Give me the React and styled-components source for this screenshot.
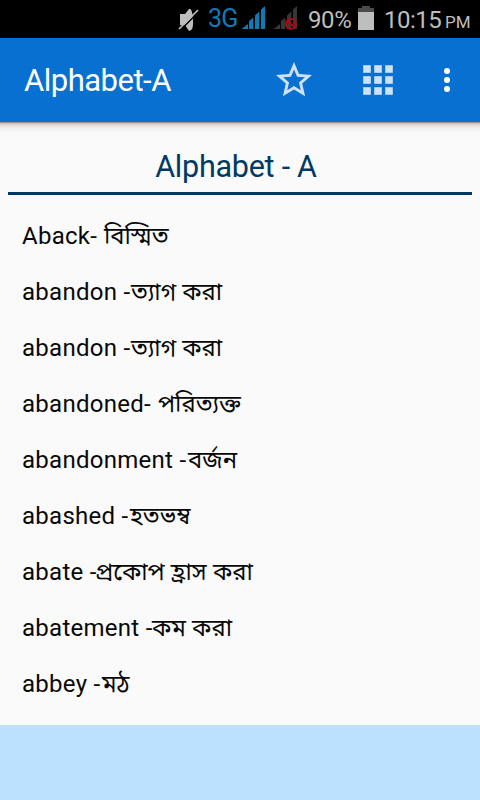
import React from "react";
import styled, { createGlobalStyle } from "styled-components";

const GlobalStyle = createGlobalStyle`
  * { box-sizing: border-box; }
  body { margin: 0; background: #fafafa; }
`;

const Screen = styled.div`
  width: 480px;
  height: 800px;
  display: flex;
  flex-direction: column;
  overflow: hidden;
  background: #fafafa;
  font-family: Roboto, "Noto Sans Bengali", "Noto Sans", sans-serif;
`;

const StatusBar = styled.div`
  flex: none;
  height: 38px;
  display: flex;
  background: #000;
  color: #bebebe;
  padding-left: 178px;
  svg { display: block; flex: none; }
`;

const StatusText = styled.span`
  flex: none;
  width: ${(p) => p.$width}px;
  font-size: ${(p) => p.$size}px;
  line-height: 38px;
  letter-spacing: ${(p) => p.$spacing || 0}px;
  padding-top: ${(p) => p.$drop || 0}px;
  color: ${(p) => p.$color || "inherit"};
  white-space: nowrap;
`;

const AppBar = styled.header`
  flex: none;
  height: 84px;
  display: flex;
  align-items: center;
  padding-left: 24px;
  background: #0870d0;
  color: #fff;
`;

const BarTitle = styled.h1`
  margin: 0;
  padding-top: 2px;
  width: 229px;
  font-size: 31px;
  font-weight: 400;
  line-height: 82px;
  letter-spacing: -0.5px;
  white-space: nowrap;
`;

const BarActions = styled.div`
  display: flex;
  align-items: center;
  svg { display: block; }
`;

const Content = styled.main`
  flex: 1;
  padding: 0 8px;
  background: linear-gradient(#777 0, #b4b4b4 1px, #d2d2d2 2px, #e4e4e4 4px, #f2f2f2 7px, #fafafa 12px);
`;

const Heading = styled.h2`
  margin: 0;
  height: 73px;
  padding: 17px 8px 0 0;
  border-bottom: 3px solid #003a63;
  color: #003a63;
  text-align: center;
  font-size: 30.5px;
  font-weight: 400;
  letter-spacing: -0.25px;
  line-height: 56px;
`;

const WordList = styled.ul`
  margin: 13px 0 0;
  padding: 0 14px;
  list-style: none;
`;

const Word = styled.li`
  display: flex;
  height: 56px;
  font-size: 24px;
  line-height: 56px;
  color: #080808;
  white-space: pre;
`;

const English = styled.span`
  flex: none;
  width: ${(p) => p.$width}px;
  letter-spacing: 0.27px;
`;

const Meaning = styled.span`
  padding-top: 2px;
  font-family: "Noto Sans Bengali", "Noto Sans", sans-serif;
  font-size: 23.9px;
`;

const BottomBanner = styled.footer`
  flex: none;
  height: 75px;
  background: #bbe1ff;
`;

const words = [
  ["Aback- ", "বিস্মিত", 82],
  ["abandon -", "ত্যাগ করা", 109],
  ["abandon -", "ত্যাগ করা", 109],
  ["abandoned- ", "পরিত্যক্ত", 136],
  ["abandonment -", "বর্জন", 166],
  ["abashed -", "হতভম্ব", 108],
  ["abate -", "প্রকোপ হ্রাস করা", 73],
  ["abatement -", "কম করা", 130],
  ["abbey -", "মঠ", 80],
];

const StatusIcons = {
  Muted: () => (
    <svg width="30" height="38" viewBox="178 0 30 38">
      <path d="M180 14h5l4-5q3-2 4 10t-4 12l-4-6h-5z" fill="#bebebe" />
      <path d="M180.300 30.300L199.300 11.300" stroke="#000" strokeWidth="1.500" />
      <path d="M179 29L198 10" stroke="#bebebe" strokeWidth="1.700" />
    </svg>
  ),
  Signal: () => (
    <svg width="31" height="38" viewBox="241 0 31 38">
      <path d="M241.500 29l6.500-5V29zM249 29v-8l4.300-3.500V29zM255 29V15.500l4.300-4V29zM261 29V9.500l4-3.500V29z" fill="#0d7cb5" />
    </svg>
  ),
  NoService: () => (
    <svg width="36" height="38" viewBox="272 0 36 38">
      <path d="M273.500 29l6.500-5V29zM281 29v-8l4.300-3.500V29zM287 29V15.500l4.300-4V29zM293 29V9.500l4-3.500V29z" fill="#373737" />
      <circle cx="291" cy="24" r="5" fill="none" stroke="#a80c0c" strokeWidth="2" />
      <path d="M287.500 20.500l7 7" stroke="#a80c0c" strokeWidth="2" />
    </svg>
  ),
  Battery: () => (
    <svg width="26" height="38" viewBox="358 0 26 38">
      <path d="M358 12V8h4V6h8v2h4v4z" fill="#4c4c4c" />
      <path d="M358 12h16v18h-16z" fill="#bebebe" />
    </svg>
  ),
};

function Actions() {
  return (
    <BarActions>
      <svg width="84" height="84" viewBox="253 38 84 84">
        <path transform="translate(272.4 58.4) scale(1.8)" fill="#cee2f6" d="M22 9.240l-7.190-.620L12 2 9.190 8.630 2 9.240l5.460 4.730L5.820 21 12 17.270 18.180 21l-1.630-7.030L22 9.240zM12 15.400l-3.760 2.270 1-4.280-3.320-2.880 4.380-.380L12 6.100l1.710 4.040 4.380.380-3.320 2.880 1 4.280L12 15.400z" />
      </svg>
      <svg width="84" height="84" viewBox="337 38 84 84">
        {[65, 76, 87].map((y) => [363, 374, 385].map((x) => (
          <rect key={`${x}-${y}`} x={x + 0.2} y={y + 0.2} width="7.600" height="7.600" fill="#cee2f6" />
        )))}
      </svg>
      <svg width="52" height="84" viewBox="421 38 52 84">
        {[71, 80, 89].map((y) => <circle key={y} cx="447" cy={y} r="3" fill="#fff" />)}
      </svg>
    </BarActions>
  );
}

export default function App() {
  return (
    <>
      <GlobalStyle />
      <Screen>
        <StatusBar>
          <StatusIcons.Muted />
          <StatusText $width={33} $size={25} $spacing={-0.7} $color="#0d7cb5">3G</StatusText>
          <StatusIcons.Signal />
          <StatusIcons.NoService />
          <StatusText $width={50} $size={24} $spacing={-0.4} $drop={1}>90%</StatusText>
          <StatusIcons.Battery />
          <StatusText $width={61} $size={24} $spacing={-0.5} $drop={1}>10:15</StatusText>
          <StatusText $width={30} $size={17} $drop={3}>PM</StatusText>
        </StatusBar>
        <AppBar>
          <BarTitle>Alphabet-A</BarTitle>
          <Actions />
        </AppBar>
        <Content>
          <Heading>Alphabet - A</Heading>
          <WordList>
            {words.map(([english, meaning, width], i) => (
              <Word key={i}>
                <English $width={width}>{english}</English>
                <Meaning>{meaning}</Meaning>
              </Word>
            ))}
          </WordList>
        </Content>
        <BottomBanner />
      </Screen>
    </>
  );
}
